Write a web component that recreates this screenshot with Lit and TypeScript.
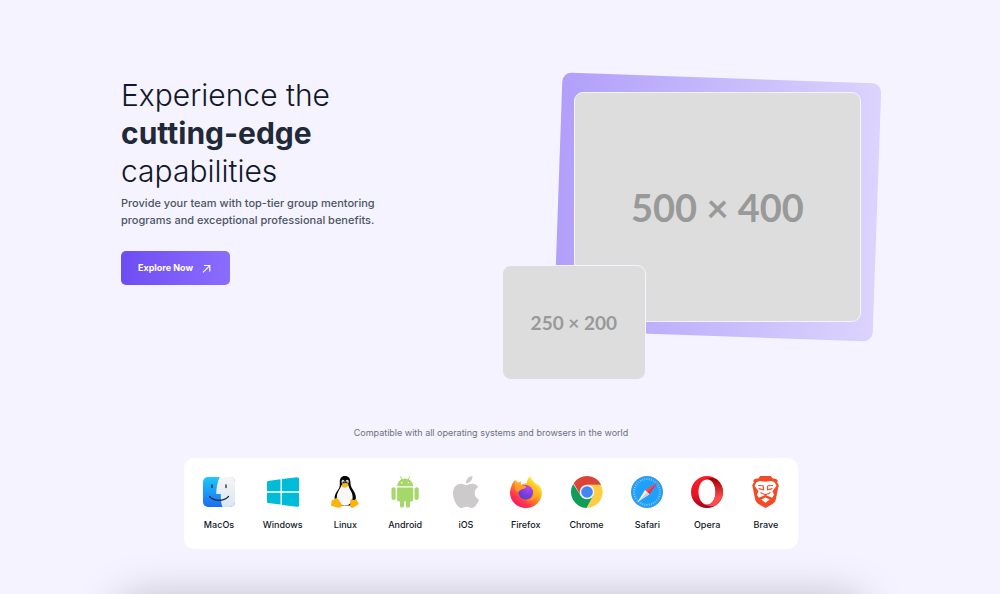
import { LitElement, html, css, svg, TemplateResult } from "lit";
import { customElement, property } from "lit/decorators.js";

const ticks = Array.from({ length: 36 }, (_, i) => i * 10);

const icons: Record<string, TemplateResult> = {
  MacOs: html`<svg width="32" height="32" viewBox="0 0 32 32" aria-hidden="true">
    <defs>
      <linearGradient id="fb" x1="0" y1="0" x2="0" y2="1"><stop offset="0" stop-color="#1ec8fb"/><stop offset="1" stop-color="#1d6cf2"/></linearGradient>
      <linearGradient id="fw" x1="0" y1="0" x2="0" y2="1"><stop offset="0" stop-color="#f6f5f5"/><stop offset="1" stop-color="#d9e6f2"/></linearGradient>
      <clipPath id="fc"><rect x="0" y="1" width="32" height="30" rx="5"/></clipPath>
    </defs>
    <g clip-path="url(#fc)">
      <rect y="1" width="32" height="30" fill="url(#fb)"/>
      <path d="M16.600 1C14.400 6 13.300 12 13.200 18h4.600c-.2 4.600.3 9 1.600 13H32V1z" fill="url(#fw)"/>
    </g>
    <path d="M9 9v2.600M23 9v2.600" stroke="#1d2a3c" stroke-width="1.300" stroke-linecap="round"/>
    <path d="M6.500 20.500c5 5.200 14 5.200 19 0" fill="none" stroke="#1d2a3c" stroke-width="1.200" stroke-linecap="round"/>
  </svg>`,
  Windows: html`<svg width="32" height="32" viewBox="0 0 32 32" aria-hidden="true">
    <path d="M0 6.200Q0 5.100 1 4.900L13.500 3.300V15.300H0zM15 3.100 29.800 1.200Q32 1 32 3V15.300H15zM0 16.700h13.500v11.900L1 27.100Q0 26.900 0 25.800zM15 16.700h17v12.600q0 1.800-2.200 1.500L15 28.900z" fill="#00bcd9"/>
  </svg>`,
  Linux: html`<svg width="28" height="32" viewBox="0 0 28 32" aria-hidden="true">
    <path d="M14 0c-3.800 0-5.300 2.700-5.200 6.200.1 3.300.2 4.600-1.600 7.300C5 16.600 3.300 19 3.600 23l3 6.500h14.800l3.500-6.200c.3-4-1.200-7-3.400-10.200-1.700-2.600-2-4.200-2.100-7C19.300 2.200 17.600 0 14 0z" fill="#050505"/>
    <path d="M10.300 9.800c-.9 2.700-3.200 5.100-4.200 8.600-.9 3.500 0 6.200 2 8.700 2.200 3.200 9 3.300 11.600-.1 2-2.900 2.400-6 1.400-9.300-.8-2.600-2.800-4.600-3.600-7.900z" fill="#f8f8f8"/>
    <ellipse cx="12" cy="5.800" rx="1.500" ry="2" fill="#ddd"/><ellipse cx="16.200" cy="5.800" rx="1.600" ry="2" fill="#ddd"/>
    <circle cx="12.300" cy="6.200" r=".8"/><circle cx="15.800" cy="6.200" r=".8"/>
    <path d="M10.200 9.400c1-1.200 2.400-2.400 3.800-2.400s3 .9 3.800 2c-.5 1.400-2.500 2.700-3.900 2.700-1.500 0-2.900-1-3.700-2.300z" fill="#f9b912"/>
    <path d="M1.100 24.200c1-.4 2-.3 2.900-1.400 1.200-1.300 2.500-.9 3.500.7l3 4.800c1 2-.5 3.500-2.800 3.500-2.300-.1-4-1.200-6.500-1.500C-.4 30-.2 29 .4 27.600c.4-1.200-.3-2.900.7-3.400z" fill="#fcb40b"/>
    <path d="M19.300 24.500c.2-1.500 1-2 2-1 1 1 2.600.6 3.400-.4.900.2 1.200 1 1.300 1.900.2.900 1.800 1.500 1.800 2.400-.2 1.300-2.300 1.800-3.900 3.300-1.300 1.300-3.300 1.600-4.300.2-.9-1.500-.2-3.800-.3-6.400z" fill="#fcb40b"/>
  </svg>`,
  Android: html`<svg width="28" height="32" viewBox="0 0 28 32" aria-hidden="true">
    <g fill="#a4d868">
      <path d="M6.100 10.300C6.200 6.900 8.100 4.500 10.400 3.200L9 .8q-.2-.5.200-.7.300-.1.600.3l1.500 2.500a10 10 0 0 1 5.600 0L18.400.4q.3-.4.600-.3.400.2.200.7l-1.400 2.400c2.300 1.300 4.200 3.700 4.300 7.100z"/>
      <path d="M6.100 11.400h16v12.100q0 1.900-1.900 1.900H19v4.400a2 2 0 0 1-4 0v-4.400h-2v4.400a2 2 0 0 1-4 0v-4.400H8q-1.900 0-1.900-1.900z"/>
      <rect x=".5" y="11.200" width="4.200" height="12.800" rx="2.100"/><rect x="23.500" y="11.200" width="4.200" height="12.800" rx="2.100"/>
    </g>
    <circle cx="10.700" cy="6.800" r=".8" fill="#fff"/><circle cx="17.500" cy="6.800" r=".8" fill="#fff"/>
  </svg>`,
  iOS: html`<svg width="32" height="32" viewBox="0 0 24 24" aria-hidden="true">
    <path fill="#cdcacc" d="M12.152 6.896c-.948 0-2.415-1.078-3.960-1.040-2.040.027-3.910 1.183-4.961 3.014-2.117 3.675-.546 9.103 1.519 12.090 1.013 1.454 2.208 3.090 3.792 3.039 1.520-.065 2.090-.987 3.935-.987 1.831 0 2.350.987 3.960.948 1.637-.026 2.676-1.480 3.676-2.948 1.156-1.688 1.636-3.325 1.662-3.415-.039-.013-3.182-1.221-3.220-4.857-.026-3.040 2.480-4.494 2.597-4.559-1.429-2.090-3.623-2.324-4.390-2.376-2-.156-3.675 1.090-4.610 1.090zM15.530 3.830c.843-1.012 1.400-2.427 1.245-3.830-1.207.052-2.662.805-3.532 1.818-.78.896-1.454 2.338-1.273 3.714 1.338.104 2.715-.688 3.559-1.701"/>
  </svg>`,
  Firefox: html`<svg width="32" height="32" viewBox="0 0 32 32" aria-hidden="true">
    <defs>
      <linearGradient id="ff1" x1=".85" y1=".1" x2=".2" y2=".95"><stop offset="0" stop-color="#fff33a"/><stop offset=".3" stop-color="#ffbb20"/><stop offset=".55" stop-color="#ff7b27"/><stop offset=".78" stop-color="#ff364b"/><stop offset="1" stop-color="#f5156c"/></linearGradient>
      <radialGradient id="ff2" cx=".7" cy=".2" r=".9"><stop offset="0" stop-color="#b64af0"/><stop offset=".5" stop-color="#803de5"/><stop offset="1" stop-color="#4d45c8"/></radialGradient>
      <linearGradient id="ff3" x1="0" y1="0" x2="0" y2="1"><stop offset="0" stop-color="#ffb52e"/><stop offset="1" stop-color="#ff8b22"/></linearGradient>
    </defs>
    <path d="M29.800 10.800c-.7-1.700-2.200-3.500-3.300-4.100.9 1.700 1.200 3 1.300 4-2-4.200-5.800-5.500-7.600-10.200-1.900 1-3.300 3.900-3.700 6.800-2 .1-3.900.7-5.500 1.700-.7-.8-.6-2.500-.1-3.600-2.100.5-3.500 1.800-4.600 3-.8-1-.8-4-.7-4.900C3.300 5 1.900 8.200 1.400 10.500.5 12.600 0 14.800 0 16.800 0 25.300 7.100 32 16 32s15.900-6.700 15.900-15.500c0-2-.9-4.100-2.100-5.700z" fill="url(#ff1)"/>
    <circle cx="15.700" cy="16.300" r="7.300" fill="url(#ff2)"/>
    <path d="M5 9 6.100 4.300 8.300 7l2.500-1.800c-.4 1.600-.3 3 .6 4.100 1.400-.1 3.400.8 4.800 1.100.1 2-2.700 2.400-4.300 3.100-1.400.6-2.900 1-3.300 2.700-2.800-.6-4.400-4-3.600-7.200z" fill="url(#ff3)"/>
    <path d="M17.500 9.500c4.500 1.200 7.200 4.700 6.500 8.300-.4 4-3.900 6.500-7.900 6.700 6 .9 10.400-2.300 11.300-7.500.8-4.500-2.300-8.300-6.100-9.300-1.500-.5-3.100.1-3.800 1.800z" fill="#ffbb24" opacity=".55"/>
  </svg>`,
  Chrome: html`<svg width="32" height="32" viewBox="0 0 32 32" aria-hidden="true">
    <path d="M16 16V8.700h13.860A16 16 0 0 1 16 32l6.300-12.400z" fill="#ffcd40"/>
    <path d="M2.140 8A16 16 0 0 0 15.600 32l6.700-12.400L9.700 19.600z" fill="#0f9d58"/>
    <path d="M2.600 7.300A16 16 0 0 1 30.200 8.700H16l-6.500 10.200z" fill="#db4437"/>
    <circle cx="16" cy="16" r="7.300" fill="#f1f1f1"/><circle cx="16" cy="16" r="5.800" fill="#4285f4"/>
  </svg>`,
  Safari: html`<svg width="32" height="32" viewBox="0 0 32 32" aria-hidden="true">
    <circle cx="16" cy="16" r="16" fill="#4a93d4"/><circle cx="16" cy="16" r="15.200" fill="#1fa0fb"/>
    ${ticks.map((a) => svg`<path d="M16 2v2.100" stroke="#b9defa" stroke-width=".6" transform=${`rotate(${a} 16 16)`}/>`)}
    <path d="M26.400 6.800 14 14l4.400 4.300z" fill="#fb4d55"/><path d="M26.400 6.800 16.200 16.200l2.200 2.100z" fill="#d93850"/>
    <path d="M6.400 26.300 14 14l4.400 4.300z" fill="#f4f4f4"/><path d="M6.400 26.300 16.200 16.200l2.200 2.100z" fill="#cbd1d8"/>
  </svg>`,
  Opera: html`<svg width="32" height="32" viewBox="0 0 32 32" aria-hidden="true">
    <defs>
      <linearGradient id="op1" x1="0" y1="0" x2="0" y2="1"><stop offset="0" stop-color="#ff1b2d"/><stop offset=".6" stop-color="#e81427"/><stop offset="1" stop-color="#a70014"/></linearGradient>
      <linearGradient id="op2" x1="0" y1="0" x2="0" y2="1"><stop offset="0" stop-color="#9c0000"/><stop offset=".7" stop-color="#ff4b4b"/></linearGradient>
    </defs>
    <path fill-rule="evenodd" d="M16 0a16 16 0 1 0 0 32 16 16 0 0 0 0-32zm0 3.200c4.800 0 8.500 5.700 8.500 12.800S20.800 28.800 16 28.800 7.500 23.100 7.500 16 11.200 3.200 16 3.200z" fill="url(#op1)"/>
    <path d="M10.700 5.900C12.600 3.700 15 2.300 17.600 2.300 22 1.500 25 2.800 26.700 4.100a16 16 0 0 1 0 23.800c-3 2.500-6 2.800-9.100 1.800-2.600 0-5-1.400-6.900-3.600 4 4.200 9.600 3 12.200-2.400 2-4.400 2-11 0-15.400-2.600-5.400-8.200-6.600-12.200-2.400z" fill="url(#op2)"/>
  </svg>`,
  Brave: html`<svg width="27" height="32" viewBox="0 0 27 32" aria-hidden="true">
    <path d="M18.700 0 21 2.700c2-.5 3.500.2 4.800 2l-.7 1.800L26.800 9l-2.900 14.300c-.6 2.300-1.700 3.400-3.400 4.700L13.500 32l-7-4C4.800 26.700 3.700 25.600 3.100 23.300L.2 9l1.700-2.500-.7-1.800c1.300-1.800 2.800-2.500 4.800-2L8.300 0z" fill="#f44b27"/>
    <path d="M8.200 4.900 13.500 5.700 18.800 4.900 22.300 6l2.200 3.800-3.500 4.600c-.6.800-.5 1.400 0 2.200l1 2.200-1.800 3-4.200-1.800-2.500-1-2.500 1-4.200 1.800L5 18.800l1-2.200c.5-.8.600-1.400 0-2.200L2.500 9.800 4.700 6z" fill="#fff"/>
    <path d="M6 9.500l5.300.3M21 9.500l-5.300.3M11.300 9.800l.3 4.600M15.700 9.800l-.3 4.600M6.600 12.600l4.300 1M20.400 12.600l-4.300 1M8.500 16.600l3 1.600M18.500 16.600l-3 1.600" fill="none" stroke="#f44b27" stroke-width="1.100"/>
    <path d="m11 17.200 2.500.8 2.500-.8-1.600 2.400-.9.500-.9-.5z" fill="#f44b27"/>
    <path d="m13.500 21.400 4.200 2.200-4.200 3.200-4.200-3.200z" fill="#fff"/>
  </svg>`,
};

@customElement("platform-item")
export class PlatformItem extends LitElement {
  @property() name = "";

  static styles = css`
    :host {
      display: flex;
      flex-direction: column;
      align-items: center;
      gap: 9px;
      min-width: 30px;
      color: #111827;
      font-size: 9px;
      font-weight: 500;
      line-height: 16px;
    }
    svg {
      display: block;
    }
  `;

  render() {
    return html`${icons[this.name]}<span>${this.name}</span>`;
  }
}

@customElement("app-root")
export class AppRoot extends LitElement {
  static styles = css`
    :host {
      display: block;
      box-sizing: border-box;
      height: 100vh;
      overflow: hidden;
      padding: 73px 18px 0 0;
      background: #f5f3ff;
      font-family: Inter, "Liberation Sans", sans-serif;
      color: #111827;
    }
    .container {
      max-width: 740px;
      margin: 0 auto;
    }
    .hero {
      display: grid;
      grid-template-columns: 1fr 1fr;
      gap: 22px;
    }
    .title {
      margin: 3px 0 0;
      font-size: 30px;
      font-weight: 300;
      line-height: 38px;
    }
    .title strong {
      display: block;
      font-weight: 700;
      color: #1f2937;
    }
    .lead {
      max-width: 270px;
      margin: 5px 0 0;
      font-size: 11px;
      font-weight: 500;
      line-height: 17px;
      color: #4b5563;
    }
    .cta {
      display: inline-flex;
      align-items: center;
      gap: 8px;
      height: 34px;
      margin-top: 22px;
      padding: 0 17px;
      border: 0;
      border-radius: 5px;
      background: linear-gradient(90deg, #6d4df2, #8b6dff);
      color: #fff;
      font: 700 9px/16px Inter, "Liberation Sans", sans-serif;
      cursor: pointer;
    }
    .visual {
      position: relative;
      padding-top: 19px;
    }
    .frame {
      position: relative;
      width: 80%;
      margin-left: auto;
    }
    .frame::before {
      content: "";
      position: absolute;
      inset: -14px -16px;
      border-radius: 9px;
      background: linear-gradient(90deg, #b19ffa, #dcd3fe);
      transform: rotate(2deg);
    }
    .shot {
      position: relative;
      display: grid;
      place-items: center;
      box-sizing: border-box;
      aspect-ratio: 5 / 4;
      border: 1px solid #f5f3ff;
      border-radius: 9px;
      background: #ddd;
      color: #999;
      font-family: Lato, sans-serif;
      font-weight: 700;
    }
    .large {
      font-size: 38px;
    }
    .small {
      position: absolute;
      left: 0;
      bottom: -58px;
      width: 40%;
      font-size: 19px;
    }
    .caption {
      margin: 103px 0 17px;
      text-align: center;
      font-size: 9px;
      font-weight: 400;
      line-height: 16px;
      color: #6b7280;
    }
    .platforms {
      display: flex;
      justify-content: space-between;
      box-sizing: border-box;
      max-width: 614px;
      margin: 0 auto;
      padding: 18px 17px 16px 19px;
      border-radius: 10px;
      background: #fff;
    }
    .next {
      height: 160px;
      margin-top: 52px;
      border-radius: 10px;
      background: #fff;
      box-shadow: 0 0 46px rgba(0, 0, 0, 0.28);
    }
  `;

  render() {
    return html`
      <main class="container">
        <section class="hero">
          <div>
            <h1 class="title">Experience the <strong>cutting-edge</strong> capabilities</h1>
            <p class="lead">Provide your team with top-tier group mentoring programs and exceptional professional benefits.</p>
            <button class="cta" type="button">
              Explore Now
              <svg width="12" height="12" viewBox="0 0 12 12" fill="none" stroke="#fff" stroke-width="1.200" aria-hidden="true">
                <path d="M2 10.300 8.500 3.800M3 3.500h5.800v6"/>
              </svg>
            </button>
          </div>
          <div class="visual">
            <div class="frame"><div class="shot large">500 × 400</div></div>
            <div class="shot small">250 × 200</div>
          </div>
        </section>
        <p class="caption">Compatible with all operating systems and browsers in the world</p>
        <section class="platforms">
          ${Object.keys(icons).map((name) => html`<platform-item name=${name}></platform-item>`)}
        </section>
        <div class="next"></div>
      </main>
    `;
  }
}
